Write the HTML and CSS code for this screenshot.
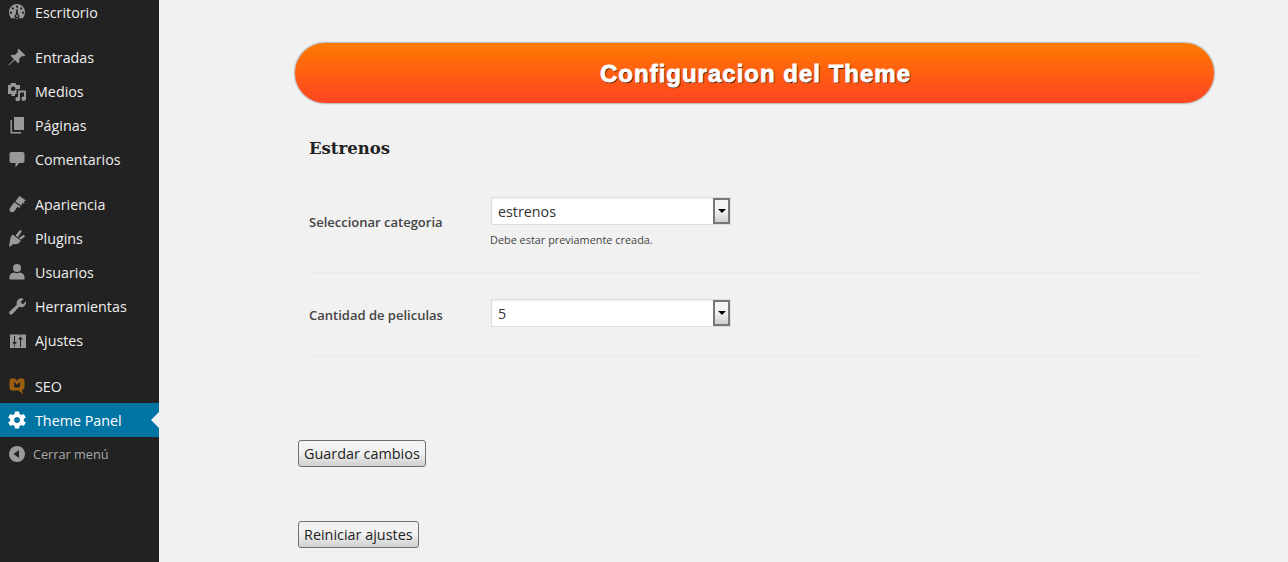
FILE: index.html
```html
<!DOCTYPE html>
<html lang="es">
<head>
<meta charset="utf-8">
<title>Theme Panel</title>
<link rel="stylesheet" href="styles.css">
</head>
<body>
<div class="page">
  <aside class="sidebar">
    <nav class="menu">
      <a class="item"><svg class="icon" viewBox="0 0 20 20"><path fill-rule="evenodd" d="M2 10a8 8 0 0 1 16 0c0 2.500-.8 4.600-2.300 6.200H4.300C2.800 14.600 2 12.500 2 10ZM10 3.500a1.100 1.100 0 1 0 .01 0ZM5.800 5.300a1.100 1.100 0 1 0 .01 0ZM14.200 5.300a1.100 1.100 0 1 0 .01 0ZM4 9.500a1.100 1.100 0 1 0 .01 0ZM16 9.500a1.100 1.100 0 1 0 .01 0ZM9.400 7 8.700 12.500A2.300 2.300 0 1 0 11.300 12.500L10.600 7Z"/><circle cx="10" cy="14" r="1"/></svg><span>Escritorio</span></a>
      <div class="gap gap-a"></div>
      <a class="item"><svg class="icon" viewBox="0 0 20 20"><path d="M11.500 1.500 18.500 8.500 16.500 9.500 15.300 8.800 12 12c.7 1.600.4 3.200-.8 4.500L7.800 13 2 18.500 1.500 18 7 12.200 3.500 8.800c1.300-1.200 2.900-1.500 4.500-.8l3.200-3.300-.7-1.200z"/></svg><span>Entradas</span></a>
      <a class="item"><svg class="icon" viewBox="0 0 20 20"><path fill-rule="evenodd" d="M4 2H8.500L9.500 4H13V8H9.500V13H8V15H4.500V13H1V4H3ZM6.200 5.500a2.300 2.300 0 1 0 .01 0Z"/><path d="M11 9.500H19V17.500A2.300 2.200 0 1 1 17 15.500V11.500H13V18A2.300 2.200 0 1 1 11 16Z"/></svg><span>Medios</span></a>
      <a class="item"><svg class="icon" viewBox="0 0 20 20"><path d="M7 2H17V15H7Z"/><path d="M5 5V17H14V18.500H3.500V5Z"/></svg><span>Páginas</span></a>
      <a class="item"><svg class="icon" viewBox="0 0 20 20"><path d="M4.500 3H15.500A2 2 0 0 1 17.500 5V12A2 2 0 0 1 15.500 14H12L8.500 18.500V14H4.500A2 2 0 0 1 2.500 12V5A2 2 0 0 1 4.500 3Z"/></svg><span>Comentarios</span></a>
      <div class="gap gap-b"></div>
      <a class="item"><svg class="icon" viewBox="0 0 20 20"><path d="M12.500 2 19 6.500 17 7.200 17.500 9.500 15.200 9 14.500 11.800 8.300 7.500Z"/><path d="M7.500 8.300 13.500 12.500 12.300 14 10.500 12.800 7.200 17.500Q5.700 19 3.700 17.800T2.700 14.600L6 9.800Z"/></svg><span>Apariencia</span></a>
      <a class="item"><svg class="icon" viewBox="0 0 20 20"><path d="M5.500 6.500 13.800 12.800Q11.500 17.300 6.500 16L3 18.800 2 18Q2.700 15 3 12.500 3 8.800 5.500 6.500Z"/><path d="M8.500 7.500 12.800 2 15 3.200 10.800 9.300Z"/><path d="M11.800 10 16.800 6.800 18 8.800 13.500 11.800Z"/></svg><span>Plugins</span></a>
      <a class="item"><svg class="icon" viewBox="0 0 20 20"><circle cx="10" cy="6" r="4"/><path d="M2.500 17.500V15C2.500 12 5 11 7.500 10.500Q10 12 12.500 10.500C15 11 17.500 12 17.500 15V17.500Z"/></svg><span>Usuarios</span></a>
      <a class="item"><svg class="icon" viewBox="0 0 20 20"><path d="M16.800 3 13.800 5.500 14.500 7.500 16.500 8 18.800 5C19.500 8 18 10.800 14.800 11.200 13.800 11.300 13 11 12.200 10.800L6 17.600C4.800 18.900 3.600 19 2.700 18.100 1.800 17.200 2 16 3.200 14.900L9.800 8.800C9.300 6.500 9.800 4.800 11.300 3.500 13 2 15 2 16.800 3Z"/></svg><span>Herramientas</span></a>
      <a class="item"><svg class="icon" viewBox="0 0 20 20"><path fill-rule="evenodd" d="M3 4.500H19V18H3ZM7 6V12H5L7.500 15 10 12H8V6ZM7 15.500V17H8V15.500ZM14 17V9.500H16L13.500 6.500 11 9.500H13V17ZM14 6H13V5.500H14Z"/></svg><span>Ajustes</span></a>
      <div class="gap gap-c"></div>
      <a class="item"><svg class="icon icon-seo" viewBox="0 0 20 20"><path fill-rule="evenodd" d="M2.500 4.500Q2.500 2.500 4.500 2.500H8L10 5 12 2.500H15.500Q17.500 2.500 17.500 4.500V11Q17.500 13.500 15 14L15.800 18.500 11.500 14.500H5.500Q2.500 14.500 2.500 11ZM7 5.500V10Q7 11.500 8.500 11.500H11.500Q13 11.500 13 10V5.500L10 9Z"/></svg><span>SEO</span></a>
      <a class="item item-current"><svg class="icon icon-gear" viewBox="0 0 20 20"><path fill-rule="evenodd" d="M8 1.500H12L12.500 4 14.400 5 16.800 4 18.800 7.400 16.800 9 16.800 11 18.800 12.600 16.800 16 14.400 15 12.500 16 12 18.500H8L7.500 16 5.600 15 3.200 16 1.200 12.600 3.200 11 3.200 9 1.200 7.400 3.200 4 5.600 5 7.500 4ZM10 7a3 3 0 1 0 .01 0Z"/></svg><span>Theme Panel</span></a>
      <a class="item item-collapse"><svg class="icon" viewBox="0 0 20 20"><path fill-rule="evenodd" d="M10 2a8 8 0 1 0 .01 0ZM12 6V14L6.500 10Z"/></svg><span>Cerrar menú</span></a>
    </nav>
  </aside>
  <main class="main">
    <h1 class="banner">Configuracion del Theme</h1>
    <section class="panel">
      <h2 class="section-title">Estrenos</h2>
      <div class="row row-first">
        <label class="row-label">Seleccionar categoria</label>
        <div class="row-field">
          <div class="select"><span class="select-value">estrenos</span><span class="select-btn"><i class="caret"></i></span></div>
          <p class="hint">Debe estar previamente creada.</p>
        </div>
      </div>
      <div class="row row-second">
        <label class="row-label">Cantidad de peliculas</label>
        <div class="row-field">
          <div class="select"><span class="select-value">5</span><span class="select-btn"><i class="caret"></i></span></div>
        </div>
      </div>
    </section>
    <div class="actions">
      <button class="btn" type="button">Guardar cambios</button>
      <button class="btn" type="button">Reiniciar ajustes</button>
    </div>
  </main>
</div>
</body>
</html>
```
FILE: styles.css
```css
* { box-sizing: border-box; }
html, body { margin: 0; height: 562px; overflow: hidden; }
body { background: #f1f1f1; font-family: "Open Sans", sans-serif; color: #444; }
.page { display: flex; height: 562px; }

.sidebar { width: 159px; flex: none; background: #222; overflow: hidden; }
.menu { display: flex; flex-direction: column; margin-top: -5px; }
.item { display: flex; align-items: center; height: 34px; color: #eee; font-size: 14.3px; flex: none; position: relative; }
.icon { width: 20px; height: 20px; margin: 0 8px 0 7px; fill: #999; flex: none; }
.gap { flex: none; }
.gap-a { height: 11px; }
.gap-b { height: 11px; }
.gap-c { height: 12px; }
.icon-seo { fill: #9c5f10; }
.icon-gear { fill: #fff; }
.item-current { background: #0074a2; color: #fff; }
.item-current::after { content: ""; position: absolute; right: 0; top: 9px; border: 8px solid transparent; border-right-color: #f1f1f1; border-left-width: 0; }
.item-collapse { color: #aaa; font-size: 12.7px; }
.item-collapse .icon { margin-right: 6px; }

.main { flex: 1; padding: 43px 74px 0 136px; }
.banner { margin: 0; height: 60px; padding-left: 2px; border-radius: 30px; background: linear-gradient(#ff7a00, #ff4422); box-shadow: 0 0 2px rgba(40,40,40,.95); color: #fff; text-align: center; font: bold 24px/62px "Liberation Sans", sans-serif; letter-spacing: 1px; -webkit-text-stroke: .8px #fff; text-shadow: 1px 1px 1px #000; }

.panel { padding: 0 13px; }
.section-title { margin: 34px 0 0 1px; font: bold 16.5px/24px "DejaVu Serif", serif; color: #222; height: 24px; }
.row { display: flex; border-bottom: 1px dotted #e4e4e4; }
.row-first { margin-top: 36px; height: 76px; }
.row-second { margin-top: 26px; height: 57px; }
.row-label { width: 183px; flex: none; padding: 15px 0 0 1px; font-size: 13px; line-height: 20px; font-weight: 600; color: #444; }
.row-second .row-label { padding-top: 6px; }
.row-field { flex: none; }
.select { display: flex; width: 240px; height: 28px; border: 1px solid #ddd; background: #fff; box-shadow: inset 0 1px 2px rgba(0,0,0,.07); }
.select-value { flex: 1; padding-left: 6px; font-size: 14.3px; line-height: 28px; color: #333; }
.select-btn { width: 17px; height: 26px; border: 2px solid #777; background: linear-gradient(#f4f4f4 45%, #cfcfcf); display: flex; align-items: center; justify-content: center; }
.caret { width: 0; height: 0; border: 4px solid transparent; border-top-color: #000; border-bottom-width: 0; }
.hint { margin: 5px 0 0 -1px; font-size: 10.9px; line-height: 20px; color: #444; }

.actions { display: flex; flex-direction: column; align-items: flex-start; gap: 54px; margin: 84px 0 0 3px; }
.btn { height: 27px; padding: 0 5px; border: 1px solid #707070; border-radius: 3px; background: linear-gradient(#f2f2f2 45%, #d0d0d0); font: 14.4px/20px "Open Sans", sans-serif; color: #222; }
```
